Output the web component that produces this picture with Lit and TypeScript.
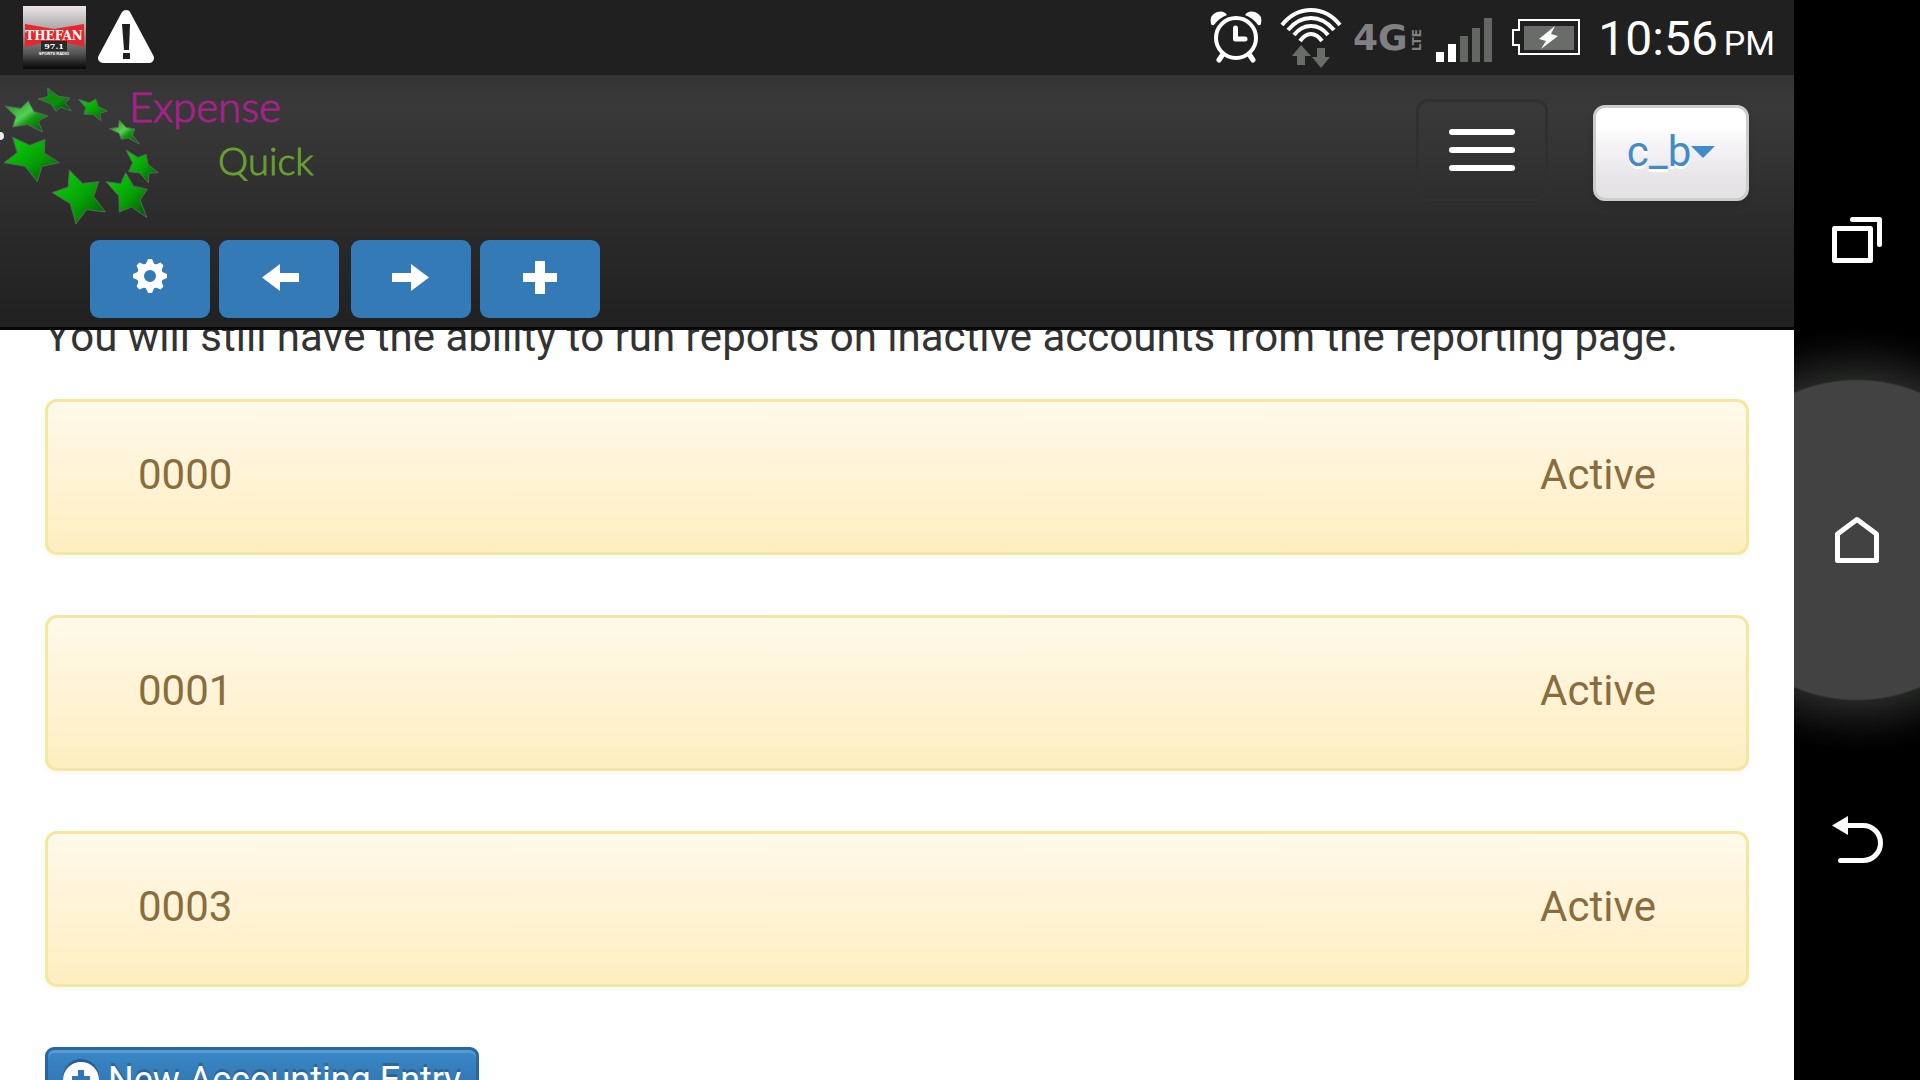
import { LitElement, html, svg, css } from "lit";
import { customElement, state } from "lit/decorators.js";

type Point = [number, number];

/** Builds a five-pointed star from its outer tips; works for skewed stars too. */
function starPoints(tips: Point[]): string {
  const cx = tips.reduce((s, p) => s + p[0], 0) / tips.length;
  const cy = tips.reduce((s, p) => s + p[1], 0) / tips.length;
  const out: Point[] = [];
  tips.forEach((tip, i) => {
    const next = tips[(i + 1) % tips.length];
    const mx = (tip[0] + next[0]) / 2;
    const my = (tip[1] + next[1]) / 2;
    out.push(tip, [cx + (mx - cx) * 0.62, cy + (my - cy) * 0.62]);
  });
  return out.map((p) => p.map((v) => v.toFixed(1)).join(",")).join(" ");
}

const LOGO_STARS: { tips: Point[]; fill: string }[] = [
  { fill: "shine", tips: [[15, 318], [85, 303], [143, 348], [128, 396], [38, 381]] },
  { fill: "deep", tips: [[143, 264], [210, 294], [214, 332], [168, 334], [115, 297]] },
  { fill: "leaf", tips: [[235, 298], [287, 297], [322, 333], [303, 362], [252, 343]] },
  { fill: "shine", tips: [[328, 386], [358, 360], [405, 387], [418, 432], [364, 418]] },
  { fill: "leaf", tips: [[378, 450], [438, 463], [475, 518], [445, 548], [386, 515]] },
  { fill: "leaf", tips: [[318, 545], [377, 518], [442, 568], [440, 652], [358, 636]] },
  { fill: "leaf", tips: [[208, 510], [296, 545], [316, 636], [228, 672], [157, 578]] },
  { fill: "leaf", tips: [[38, 412], [135, 418], [178, 488], [112, 545], [12, 488]] },
];

@customElement("status-bar")
export class StatusBar extends LitElement {
  static styles = css`
    :host {
      display: flex;
      align-items: center;
      height: 75px;
      padding: 0 19px 0 23px;
      background: #202020;
      color: #fff;
      font-family: Roboto, sans-serif;
    }
    svg {
      display: block;
      flex: none;
      overflow: visible;
    }
    .notices,
    .system {
      display: flex;
      align-items: center;
    }
    .notices {
      gap: 12px;
    }
    .system {
      margin-left: auto;
      gap: 18px;
    }
    .radio {
      display: flex;
      align-items: center;
      gap: 12px;
    }
    .clock {
      display: flex;
      align-items: baseline;
      gap: 6px;
      padding-top: 6px;
      font-size: 48px;
      line-height: 69px;
    }
    .meridiem {
      font-size: 34px;
    }
    .fan {
      font: 700 12px "DejaVu Serif", serif;
    }
    .freq {
      font: 700 8px "DejaVu Serif", serif;
    }
    .tag {
      font: 700 4px "Liberation Sans", sans-serif;
    }
    .net {
      font: 700 36px "DejaVu Sans", sans-serif;
    }
    .lte {
      font: 700 12px "DejaVu Sans", sans-serif;
    }
  `;

  render() {
    return html`
      <div class="notices">
        <svg width="63" height="63" viewBox="0 0 63 63" role="img" aria-label="The Fan 97.1">
          <defs>
            <linearGradient id="tile" x1="0" y1="0" x2="0" y2="1">
              <stop offset="0" stop-color="#ece4e8" />
              <stop offset=".3" stop-color="#b4b2b3" />
              <stop offset=".75" stop-color="#555" />
              <stop offset=".92" stop-color="#1c1c1c" />
              <stop offset="1" stop-color="#080808" />
            </linearGradient>
          </defs>
          <rect width="63" height="63" fill="url(#tile)" />
          <path d="M2 18L31 23L61 18V41L44 37H19L2 41z" fill="#e8262b" />
          <rect x="18" y="35" width="26" height="10" fill="#232a27" />
          <text class="fan" x="31" y="34" text-anchor="middle" fill="#fff">THEFAN</text>
          <text class="freq" x="31" y="43" text-anchor="middle" fill="#fff">97.1</text>
          <text class="tag" x="31" y="49" text-anchor="middle" fill="#fff">SPORTS RADIO</text>
        </svg>
        <svg width="56" height="63" viewBox="0 0 56 63" aria-hidden="true">
          <path d="M28 9L51 52H5z" fill="#fff" stroke="#fff" stroke-width="10" stroke-linejoin="round" />
          <path d="M24 18H32L31 44H26z M25 47H32V53H25z" fill="#202020" />
        </svg>
      </div>
      <div class="system">
        <svg width="52" height="75" viewBox="0 0 52 75" aria-hidden="true">
          <g fill="none" stroke="#fff" stroke-linecap="round">
            <circle cx="26" cy="38" r="20" stroke-width="4" />
            <path d="M25.500 28V39H35" stroke-width="5" stroke-linejoin="round" />
            <path d="M13 54L9 60M39 54L43 60" stroke-width="5" />
          </g>
          <path d="M1 24Q-1 15 7 12Q14 10 17 15Q9 18 4 25Q2 26 1 24zM51 24Q53 15 45 12Q38 10 35 15Q43 18 48 25Q50 26 51 24z" fill="#fff" />
        </svg>
        <div class="radio">
          <svg width="62" height="75" viewBox="0 0 62 75" aria-hidden="true">
            <g fill="none" stroke="#fff" stroke-width="4">
              <path d="M2 25Q14 10 31 10Q48 10 60 25" />
              <path d="M8 30Q18 18 31 18Q44 18 54 30" />
              <path d="M14 35Q21 26 31 26Q41 26 48 35" />
              <path d="M20 41Q25 34 31 34Q37 34 42 41" />
            </g>
            <path d="M21 45L31 56H25V65H17V56H12zM37 48H45V57H50L41 68L32 57H37z" fill="#6a6c6a" />
          </svg>
          <svg width="68" height="75" viewBox="0 0 68 75" role="img" aria-label="4G LTE">
            <text class="net" x="-1" y="50" fill="#807f82">4G</text>
            <text class="lte" transform="translate(67 51) rotate(-90)" fill="#807f82">LTE</text>
          </svg>
          <svg width="60" height="75" viewBox="0 0 60 75" aria-hidden="true">
            <path d="M2 52H10V62H2zM14 44H22V62H14z" fill="#fff" />
            <path d="M26 36H34V62H26zM38 28H46V62H38zM50 18H58V62H50z" fill="#646664" />
          </svg>
        </div>
        <svg width="68" height="75" viewBox="0 0 68 75" aria-hidden="true">
          <path d="M7 20H67V54H7V45H1V30H7z" fill="#202020" stroke="#fff" stroke-width="2" />
          <path d="M12 26H62V50H12z" fill="#6a6c6a" />
          <path d="M43 26L27 39L34 41L29 49L46 36L39 34z" fill="#fff" />
        </svg>
        <time class="clock">10:56 <span class="meridiem">PM</span></time>
      </div>
    `;
  }
}

@customElement("expense-header")
export class ExpenseHeader extends LitElement {
  static styles = css`
    :host {
      display: block;
      position: relative;
      z-index: 1;
      border-bottom: 3px solid #080808;
      background: linear-gradient(#333433 0%, #383938 13%, #303130 40%, #282928 65%, #202120 100%);
      font-family: Roboto, sans-serif;
      font-kerning: none;
    }
    svg {
      display: block;
    }
    .top {
      display: flex;
      align-items: flex-start;
      justify-content: space-between;
    }
    .controls {
      display: flex;
      align-items: flex-end;
      gap: 45px;
      padding: 24px 45px 39px 0;
    }
    button {
      margin: 0;
      font: inherit;
      cursor: pointer;
    }
    .toggle {
      display: flex;
      flex-direction: column;
      gap: 12px;
      padding: 27px 30px;
      border: 3px solid #303030;
      border-radius: 12px;
      background: transparent;
    }
    .bar {
      width: 66px;
      height: 6px;
      border-radius: 3px;
      background: #fff;
    }
    .user {
      display: flex;
      align-items: center;
      justify-content: center;
      min-width: 156px;
      height: 96px;
      padding: 0 30px 3px;
      border: 3px solid #ccc;
      border-radius: 12px;
      background: linear-gradient(#fff 20%, #f5f3f5 42%, #e6e4e6 80%, #e6e2e5);
      color: #428bca;
      font-size: 42px;
      line-height: 60px;
      text-shadow: 0 3px 0 #fff;
      box-shadow: 0 3px 6px rgba(0, 0, 0, 0.12);
    }
    .caret {
      border-top: 12px solid #428bca;
      border-left: 12px solid transparent;
      border-right: 12px solid transparent;
    }
    .actions {
      display: flex;
      gap: 12px;
      padding: 0 90px 9px;
    }
    .pair {
      display: flex;
      gap: 9px;
    }
    .action {
      display: flex;
      justify-content: center;
      width: 120px;
      padding: 16px 0 20px;
      border: 0;
      border-radius: 9px;
      background: #337ab7;
      color: #fff;
    }
    .word {
      font-family: Lato, sans-serif;
      font-weight: 300;
      font-size: 42px;
    }
    .small {
      font-size: 38px;
    }
  `;

  private icon(body: unknown) {
    return html`<svg width="42" height="42" viewBox="0 0 42 42" fill="currentColor" aria-hidden="true">${body}</svg>`;
  }

  render() {
    const teeth = [0, 45, 90, 135, 180, 225, 270, 315];
    return html`
      <div class="top">
        <svg width="340" height="165" viewBox="0 0 340 165" role="img" aria-label="Expense Quick">
          <defs>
            <linearGradient id="leaf" x1="0" y1="0" x2="1" y2="1">
              <stop offset=".2" stop-color="#08c408" />
              <stop offset=".55" stop-color="#06a006" />
              <stop offset="1" stop-color="#045004" />
            </linearGradient>
            <linearGradient id="deep" x1="0" y1="0" x2="1" y2="1">
              <stop offset="0" stop-color="#0c8c0c" />
              <stop offset=".6" stop-color="#0a8f0a" />
              <stop offset="1" stop-color="#064006" />
            </linearGradient>
            <linearGradient id="shine" x1="0" y1="0" x2="1" y2="1">
              <stop offset="0" stop-color="#129012" />
              <stop offset=".45" stop-color="#55d055" />
              <stop offset=".6" stop-color="#149a14" />
              <stop offset="1" stop-color="#065006" />
            </linearGradient>
          </defs>
          <g transform="translate(0 -75) scale(.3333)" stroke="#5a665a" stroke-width="3" stroke-linejoin="round">
            ${LOGO_STARS.map((s) => svg`<polygon points=${starPoints(s.tips)} fill="url(#${s.fill})" />`)}
          </g>
          <circle cx="0" cy="61" r="4" fill="#eee" />
          <text class="word" x="129" y="47" fill="#a8208c" stroke="#a8208c">Expense</text>
          <text class="word small" x="218" y="100" fill="#67a030" stroke="#67a030">Quick</text>
        </svg>
        <div class="controls">
          <button class="toggle" aria-label="Toggle navigation">
            <span class="bar"></span><span class="bar"></span><span class="bar"></span>
          </button>
          <button class="user">c_b<span class="caret"></span></button>
        </div>
      </div>
      <div class="actions">
        <div class="pair">
          <button class="action" aria-label="Settings">
            ${this.icon(svg`
              <circle cx="21" cy="20" r="9.500" fill="none" stroke="currentColor" stroke-width="7" />
              ${teeth.map((a) => svg`<path d="M16 10L19 3H23L26 10z" transform="rotate(${a} 21 20)" />`)}
            `)}
          </button>
          <button class="action" aria-label="Back">
            ${this.icon(svg`<path d="M4 21.500L22 8V17H41V26H22V35z" />`)}
          </button>
        </div>
        <div class="pair">
          <button class="action" aria-label="Forward">
            ${this.icon(svg`<path d="M39 21.500L21 8V17H2V26H21V35z" />`)}
          </button>
          <button class="action" aria-label="Add">
            ${this.icon(svg`<path d="M16 5H26V17H38V26H26V38H16V26H4V17H16z" />`)}
          </button>
        </div>
      </div>
    `;
  }
}

@customElement("account-list")
export class AccountList extends LitElement {
  @state() private accounts = [
    { code: "0000", status: "Active" },
    { code: "0001", status: "Active" },
    { code: "0003", status: "Active" },
  ];

  static styles = css`
    :host {
      display: block;
      flex: 1;
      min-height: 0;
      overflow: hidden;
      padding: 0 45px;
      background: #fff;
      color: #333;
      font-family: Roboto, sans-serif;
      font-size: 42px;
      font-kerning: none;
      line-height: 60px;
    }
    .note {
      margin: -23px 0 32px;
    }
    .list {
      display: flex;
      flex-direction: column;
      gap: 60px;
      margin: 0 0 60px;
      padding: 0;
      list-style: none;
    }
    .item {
      display: flex;
      justify-content: space-between;
      padding: 43px 90px 47px;
      border: 3px solid #f5e79e;
      border-radius: 12px;
      background: linear-gradient(#fff9ea, #fff4d8 45%, #feeec0);
      color: #8a6d3b;
      text-shadow: 0 3px 0 rgba(255, 255, 255, 0.2);
      box-shadow: inset 0 3px 0 rgba(255, 255, 255, 0.25), 0 3px 6px rgba(0, 0, 0, 0.03);
    }
    .new {
      display: flex;
      align-items: center;
      gap: 9px;
      margin: 0;
      padding: 3px 15px;
      border: 3px solid #2766a0;
      border-radius: 9px;
      background: linear-gradient(#3a87c8, #2d6ca2);
      box-shadow: inset 0 3px 0 rgba(255, 255, 255, 0.17);
      color: #fff;
      font: 400 36px/54px Roboto, sans-serif;
      font-kerning: none;
      text-shadow: 0 -3px 0 rgba(0, 0, 0, 0.2);
    }
  `;

  render() {
    return html`
      <p class="note">
        You will still have the ability to run reports on inactive accounts from the reporting page.
      </p>
      <ul class="list">
        ${this.accounts.map(
          (a) => html`<li class="item"><span>${a.code}</span><span>${a.status}</span></li>`
        )}
      </ul>
      <button class="new">
        <svg width="36" height="42" viewBox="0 0 36 42" aria-hidden="true">
          <circle cx="18" cy="18" r="18" fill="#285f90" />
          <circle cx="18" cy="21" r="18" fill="#fff" />
          <path d="M15 11H21V17H27V24H21V30H15V24H9V17H15z" fill="#3276b4" />
        </svg>
        New Accounting Entry
      </button>
    `;
  }
}

@customElement("system-nav")
export class SystemNav extends LitElement {
  static styles = css`
    :host {
      display: flex;
      flex-direction: column;
      justify-content: center;
      flex: none;
      width: 126px;
      background: radial-gradient(
        circle at center,
        #424242 159px,
        #232523 161px,
        #141514 178px,
        #060706 196px,
        #000 212px
      );
    }
    .key {
      display: flex;
      align-items: center;
      justify-content: center;
      height: 300px;
      margin: 0;
      padding: 0;
      border: 0;
      background: transparent;
      color: #fff;
    }
  `;

  private key(label: string, body: unknown) {
    return html`<button class="key" aria-label=${label}>
      <svg width="56" height="56" viewBox="0 0 56 56" fill="none" stroke="currentColor" stroke-width="5" stroke-linecap="round" stroke-linejoin="round" aria-hidden="true">
        ${body}
      </svg>
    </button>`;
  }

  render() {
    return html`
      ${this.key("Recent apps", svg`<path d="M5.500 16.500H41.500V48.500H5.500zM23.500 7.500H50.500V32.500" />`)}
      ${this.key("Home", svg`<path d="M8.500 22L28 7.500L47.500 22V48.500H8.500z" />`)}
      ${this.key(
        "Back",
        svg`<path d="M17 13.500H34A17 17 0 0 1 34 48.500H11.500" />
          <path d="M3 13.500L19 4V23z" fill="currentColor" stroke="none" />`
      )}
    `;
  }
}

@customElement("app-root")
export class AppRoot extends LitElement {
  static styles = css`
    :host {
      display: flex;
      height: 100vh;
      overflow: hidden;
      background: #000;
    }
    .screen {
      display: flex;
      flex: 1;
      flex-direction: column;
      min-width: 0;
    }
  `;

  render() {
    return html`
      <div class="screen">
        <status-bar></status-bar>
        <expense-header></expense-header>
        <account-list></account-list>
      </div>
      <system-nav></system-nav>
    `;
  }
}
